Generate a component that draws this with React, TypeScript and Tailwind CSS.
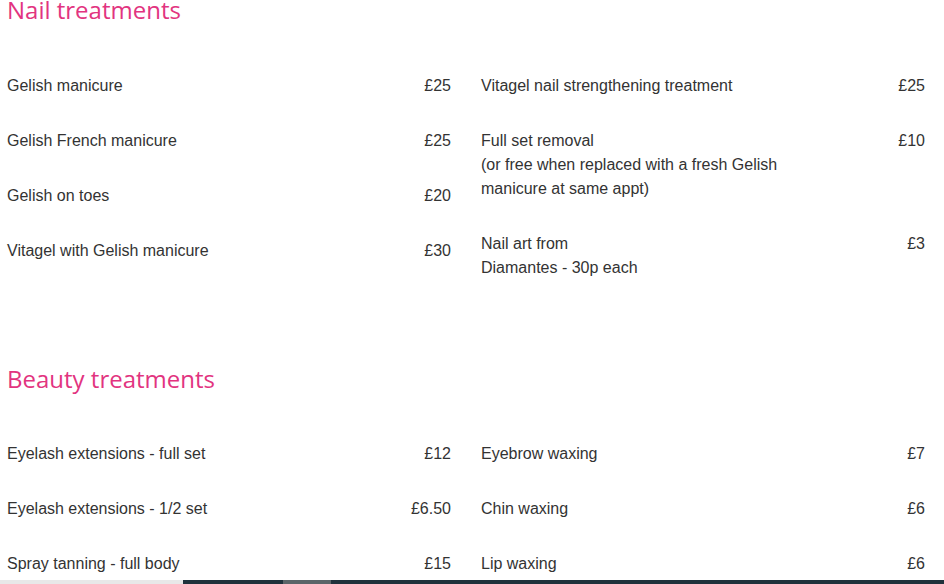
import React from "react";

type Item = { lines: string[]; price: string };

const nailLeft: Item[] = [
  { lines: ["Gelish manicure"], price: "£25" },
  { lines: ["Gelish French manicure"], price: "£25" },
  { lines: ["Gelish on toes"], price: "£20" },
  { lines: ["Vitagel with Gelish manicure"], price: "£30" },
];
const nailRight: Item[] = [
  { lines: ["Vitagel nail strengthening treatment"], price: "£25" },
  {
    lines: ["Full set removal", "(or free when replaced with a fresh Gelish", "manicure at same appt)"],
    price: "£10",
  },
  { lines: ["Nail art from", "Diamantes - 30p each"], price: "£3" },
];
const beautyLeft: Item[] = [
  { lines: ["Eyelash extensions - full set"], price: "£12" },
  { lines: ["Eyelash extensions - 1/2 set"], price: "£6.50" },
  { lines: ["Spray tanning - full body"], price: "£15" },
];
const beautyRight: Item[] = [
  { lines: ["Eyebrow waxing"], price: "£7" },
  { lines: ["Chin waxing"], price: "£6" },
  { lines: ["Lip waxing"], price: "£6" },
];

function Row({ item }: { item: Item }) {
  return (
    <div className="flex justify-between items-start mb-[31px] text-[16px] leading-[24px] text-[#333333]">
      <div>
        {item.lines.map((l, i) => (
          <div key={i}>{l}</div>
        ))}
      </div>
      <div>{item.price}</div>
    </div>
  );
}

function Columns({ left, right }: { left: Item[]; right: Item[] }) {
  return (
    <div className="grid grid-cols-[444px_444px] gap-x-[30px]">
      <div className="flex flex-col">
        {left.map((it, i) => (
          <Row key={i} item={it} />
        ))}
      </div>
      <div className="flex flex-col">
        {right.map((it, i) => (
          <Row key={i} item={it} />
        ))}
      </div>
    </div>
  );
}

export default function App() {
  return (
    <div
      className="w-[944px] h-[584px] overflow-hidden flex flex-col bg-white"
      style={{ fontFamily: '"Liberation Sans", Arial, sans-serif' }}
    >
      <div className="flex-1 overflow-hidden pl-[7px]">
        <h2
          className="text-[24px] leading-[20px] h-[20px] text-[#e2347f] font-normal"
          style={{ fontFamily: '"Open Sans", sans-serif' }}
        >
          Nail treatments
        </h2>
        <div className="mt-[54px]">
          <Columns left={nailLeft} right={nailRight} />
        </div>
        <h2
          className="mt-[58px] text-[24px] leading-[20px] h-[20px] text-[#e2347f] font-normal"
          style={{ fontFamily: '"Open Sans", sans-serif' }}
        >
          Beauty treatments
        </h2>
        <div className="mt-[53px]">
          <Columns left={beautyLeft} right={beautyRight} />
        </div>
      </div>
      <div className="h-[4px] shrink-0 flex">
        <div className="w-[183px] bg-[#e8e8e8]" />
        <div className="w-[100px] bg-[#1f323c]" />
        <div className="w-[48px] bg-[#5b6569]" />
        <div className="flex-1 bg-[#1f323c]" />
      </div>
    </div>
  );
}
